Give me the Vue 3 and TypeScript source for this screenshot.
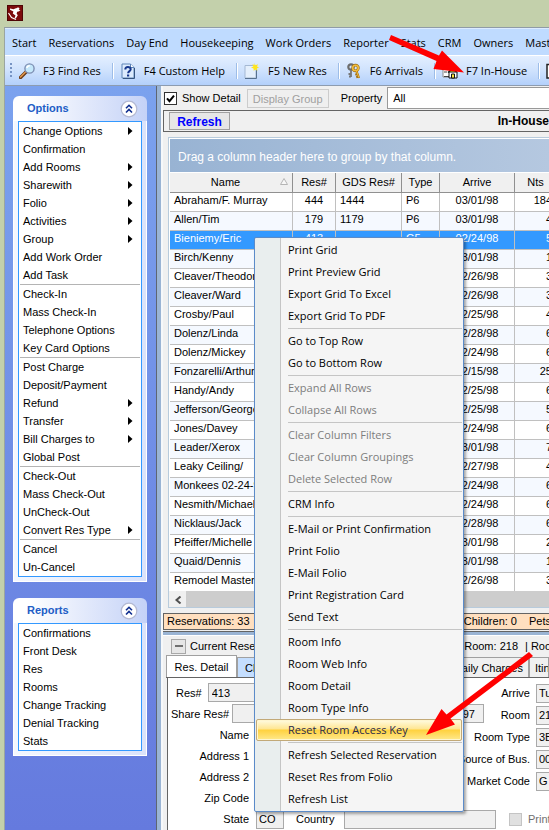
<script setup lang="ts">
import { ref } from 'vue'

interface Option { label: string; sub?: boolean }
interface Row { name: string; res: string; gds: string; type: string; arrive: string; nts: number }

const menus = ['Start', 'Reservations', 'Day End', 'Housekeeping', 'Work Orders', 'Reporter', 'Stats', 'CRM', 'Owners', 'Master']
const tools = [
  { icon: 'find', label: 'F3 Find Res' },
  { icon: 'help', label: 'F4 Custom Help' },
  { icon: 'new', label: 'F5 New Res' },
  { icon: 'keys', label: 'F6 Arrivals' },
  { icon: 'house', label: 'F7 In-House' },
  { icon: 'page', label: '' },
]

const o = (label: string, sub = false): Option => ({ label, sub })
const optionGroups: Option[][] = [
  [o('Change Options', true), o('Confirmation'), o('Add Rooms', true), o('Sharewith', true), o('Folio', true), o('Activities', true), o('Group', true), o('Add Work Order'), o('Add Task')],
  [o('Check-In'), o('Mass Check-In'), o('Telephone Options'), o('Key Card Options')],
  [o('Post Charge'), o('Deposit/Payment'), o('Refund', true), o('Transfer', true), o('Bill Charges to', true), o('Global Post')],
  [o('Check-Out'), o('Mass Check-Out'), o('UnCheck-Out'), o('Convert Res Type', true)],
  [o('Cancel'), o('Un-Cancel')],
]
const reportGroups: Option[][] = [
  ['Confirmations', 'Front Desk', 'Res', 'Rooms', 'Change Tracking', 'Denial Tracking', 'Stats'].map((l) => o(l)),
]
const panels = [
  { title: 'Options', groups: optionGroups },
  { title: 'Reports', groups: reportGroups },
]

const r = (name: string, arrive: string, nts: number, res = '', gds = '', type = ''): Row => ({ name, arrive, nts, res, gds, type })
const rows: Row[] = [
  r('Abraham/F. Murray', '03/01/98', 184, '444', '1444', 'P6'),
  r('Allen/Tim', '03/01/98', 4, '179', '1179', 'P6'),
  r('Bieniemy/Eric', '02/24/98', 5, '413', '', 'G5'),
  r('Birch/Kenny', '03/01/98', 1),
  r('Cleaver/Theodore', '02/26/98', 3),
  r('Cleaver/Ward', '02/26/98', 3),
  r('Crosby/Paul', '02/25/98', 4),
  r('Dolenz/Linda', '02/28/98', 6),
  r('Dolenz/Mickey', '02/24/98', 6),
  r('Fonzarelli/Arthur', '02/15/98', 25),
  r('Handy/Andy', '02/25/98', 6),
  r('Jefferson/George', '02/25/98', 5),
  r('Jones/Davey', '02/24/98', 6),
  r('Leader/Xerox', '03/01/98', 7),
  r('Leaky Ceiling/', '02/27/98', 4),
  r('Monkees 02-24-98', '02/24/98', 6),
  r('Nesmith/Michael', '02/24/98', 6),
  r('Nicklaus/Jack', '02/28/98', 6),
  r('Pfeiffer/Michelle', '03/01/98', 2),
  r('Quaid/Dennis', '03/01/98', 1),
  r('Remodel Master', '02/26/98', 3),
]

const contextGroups: { disabled?: boolean; items: string[] }[] = [
  { items: ['Print Grid', 'Print Preview Grid', 'Export Grid To Excel', 'Export Grid To PDF'] },
  { items: ['Go to Top Row', 'Go to Bottom Row'] },
  { disabled: true, items: ['Expand All Rows', 'Collapse All Rows'] },
  { disabled: true, items: ['Clear Column Filters', 'Clear Column Groupings', 'Delete Selected Row'] },
  { items: ['CRM Info'] },
  { items: ['E-Mail or Print Confirmation', 'Print Folio', 'E-Mail Folio', 'Print Registration Card', 'Send Text'] },
  { items: ['Room Info', 'Room Web Info', 'Room Detail', 'Room Type Info', 'Reset Room Access Key'] },
  { items: ['Refresh Selected Reservation', 'Reset Res from Folio', 'Refresh List'] },
]
const highlighted = 'Reset Room Access Key'

const showDetail = ref(true)
const selected = ref(2)
const stay = [
  { id: 'arrive', label: 'Arrive', value: 'Tue 02/24/98' },
  { id: 'room', label: 'Room', value: '218' },
  { id: 'roomtype', label: 'Room Type', value: '3B' },
  { id: 'source', label: 'Source of Bus.', value: '00' },
  { id: 'market', label: 'Market Code', value: 'G' },
]
</script>

<template>
  <div class="desktop">
    <header class="titlebar">
      <svg class="logo" viewBox="0 0 16 16" width="16" height="16">
        <rect width="16" height="16" fill="#7c0a0c" />
        <rect x=".5" y=".5" width="15" height="15" fill="none" stroke="#4d0505" />
        <circle cx="11" cy="3.800" r="1.400" fill="#fff" />
        <path d="M3 3.500l3.500.8L9.500 3l1.300 1.800 2.700.5-1.900 1.300-1.400.2-.6 1.700 1.200 1.800-2 3.200-1.200-.6.900-2.400-2.700-2 .6-2.100L3 4.800z" fill="#fff" />
        <path d="M1.500 8l3 4.500 4.500 2" fill="none" stroke="#fff" stroke-width="1.200" />
      </svg>
    </header>

    <div class="window">
      <nav class="menubar">
        <button v-for="m in menus" :key="m" type="button">{{ m }}</button>
      </nav>

      <div class="toolbar">
        <span class="grip"></span>
        <button v-for="t in tools" :key="t.icon" type="button" :aria-label="t.label || 'Page'">
          <svg v-if="t.icon === 'find'" viewBox="0 0 16 16" width="16" height="16">
            <path d="M1.500 14.500L7.500 8.500" stroke="#6b3a18" stroke-width="3.400" stroke-linecap="round" />
            <path d="M1.500 14L7 8.500" stroke="#e39a4e" stroke-width="1.500" stroke-linecap="round" />
            <circle cx="10.500" cy="5.500" r="4.600" fill="#c4e8fb" stroke="#7d8fb3" stroke-width="1.400" />
            <path d="M7.800 5.200a3 3 0 0 1 3-2.500" stroke="#fff" stroke-width="1.500" fill="none" />
          </svg>
          <svg v-else-if="t.icon === 'help'" viewBox="0 0 16 16" width="16" height="16">
            <path d="M2 1h8.500L14 4.500V15H2z" fill="#dcebfd" stroke="#5f86b8" />
            <path d="M10.500 1v3.500H14" fill="#fff" stroke="#5f86b8" />
            <path d="M14.500 5v10.500H3" fill="none" stroke="#35557f" />
            <path d="M5.300 6.500C5.300 3.200 10.700 3.300 10.700 6.300c0 1.800-2.600 1.900-2.600 4" fill="none" stroke="#15368c" stroke-width="2" />
            <rect x="7" y="11.500" width="2.200" height="2" fill="#15368c" />
          </svg>
          <svg v-else-if="t.icon === 'new'" viewBox="0 0 16 16" width="16" height="16">
            <path d="M1 2.500h11V15H1z" fill="#e4effc" stroke="#a4b8d3" />
            <path d="M12.500 6v9.500H1" fill="none" stroke="#58718f" />
            <path d="M10.500 0l1 2.300L14 1.200 13 3.600l2 1-2.200.9.700 2.300-2.400-1.200L9.800 8l-.3-2.500L7 4.600l2.300-1.100-.8-2.400 2 1.200z" fill="#ffe51f" />
          </svg>
          <svg v-else-if="t.icon === 'keys'" viewBox="0 0 16 16" width="16" height="16">
            <circle cx="5" cy="4" r="2.700" fill="none" stroke="#6d6d6d" stroke-width="2.200" />
            <path d="M5 7v7M5 11H2.500M5 13.500H3" stroke="#777" stroke-width="1.800" />
            <circle cx="9.500" cy="5" r="2.800" fill="none" stroke="#9a6b12" stroke-width="2.800" />
            <circle cx="9.500" cy="5" r="2.800" fill="none" stroke="#f2bd3d" stroke-width="1.600" />
            <path d="M10.500 8l2.500 7M11.500 11l-2.200.8M12.500 13.500l-2.300.8" stroke="#a87414" stroke-width="2.200" />
            <path d="M10.500 8l2.300 6.500" stroke="#f2bd3d" />
          </svg>
          <svg v-else-if="t.icon === 'house'" viewBox="0 0 16 16" width="16" height="16">
            <path d="M1 2h9v12H1z" fill="#fff" stroke="#8b8b8b" />
            <path d="M2 6h4M2 9h3M2 13.500h6" stroke="#444" />
            <path d="M6 9.500l4.500-4 4.500 4" fill="#ffe93b" stroke="#111" stroke-width="1.500" />
            <path d="M7 9h8v6H7z" fill="#fff" stroke="#111" />
            <path d="M9.500 11h3v4h-3z" fill="#ffe93b" stroke="#111" />
          </svg>
          <svg v-else viewBox="0 0 16 16" width="16" height="16">
            <path d="M1 1.500h13V15H1z" fill="#fff" stroke="#222" stroke-width="1.500" />
          </svg>
          <span v-if="t.label">{{ t.label }}</span>
        </button>
      </div>

      <div class="body">
        <aside class="sidebar">
          <section v-for="p in panels" :key="p.title" class="panel">
            <h2>
              {{ p.title }}
              <button type="button" class="collapse" :aria-label="'Collapse ' + p.title">
                <svg viewBox="0 0 18 18" width="18" height="18">
                  <circle cx="9" cy="9" r="7.800" fill="#fff" stroke="#b3b9d2" stroke-width="1.200" />
                  <path d="M6 8.300L9 5.300l3 3M6 12.500l3-3 3 3" fill="none" stroke="#102f90" stroke-width="1.600" />
                </svg>
              </button>
            </h2>
            <div class="panel-body">
              <ul v-for="(g, i) in p.groups" :key="i">
                <li v-for="it in g" :key="it.label">
                  <button type="button">
                    <span>{{ it.label }}</span>
                    <svg v-if="it.sub" viewBox="0 0 5 8" width="5" height="8"><path d="M0 0l4.500 4L0 8z" fill="#000" /></svg>
                  </button>
                </li>
              </ul>
            </div>
          </section>
        </aside>

        <div class="splitter"></div>

        <main class="content">
          <div class="filters">
            <label class="check">
              <input v-model="showDetail" type="checkbox" />
              <svg viewBox="0 0 13 13" width="13" height="13">
                <rect x=".5" y=".5" width="12" height="12" fill="#fff" stroke="#333" />
                <path v-if="showDetail" d="M3 6.300l2.500 2.900L10 3.700" fill="none" stroke="#000" stroke-width="2" />
              </svg>
              Show Detail
            </label>
            <button type="button" class="display" disabled>Display Group</button>
            <label for="property">Property</label>
            <select id="property"><option>All</option></select>
          </div>

          <div class="heading">
            <button type="button" class="refresh">Refresh</button>
            <strong>In-House</strong>
          </div>

          <div class="grid">
            <div class="groupby">Drag a column header here to group by that column.</div>
            <table>
              <colgroup><col class="c-name" /><col class="c-res" /><col class="c-gds" /><col class="c-type" /><col class="c-arrive" /><col /></colgroup>
              <thead>
                <tr>
                  <th class="sorted">
                    <span>Name</span>
                    <svg viewBox="0 0 8 7" width="8" height="7"><path d="M.5 6.500L4 .5l3.500 6z" fill="#f8f8f8" stroke="#b5b5b5" /></svg>
                  </th>
                  <th>Res#</th><th>GDS Res#</th><th>Type</th><th>Arrive</th><th>Nts</th>
                </tr>
              </thead>
              <tbody>
                <tr v-for="(row, i) in rows" :key="row.name" :class="{ selected: i === selected }" @click="selected = i">
                  <td>{{ row.name }}</td>
                  <td class="mid">{{ row.res }}</td>
                  <td>{{ row.gds }}</td>
                  <td>{{ row.type }}</td>
                  <td class="mid">{{ row.arrive }}</td>
                  <td class="num">{{ row.nts }}</td>
                </tr>
              </tbody>
            </table>
            <div class="scroll">
              <button type="button" aria-label="Scroll left">
                <svg viewBox="0 0 8 8" width="8" height="8"><path d="M6.500 .5L2.500 4l4 3.500" fill="none" stroke="#505050" stroke-width="2" /></svg>
              </button>
              <span class="thumb"></span>
            </div>
          </div>

          <div class="totals">
            <span>Reservations: 33</span>
            <span class="right">Children: 0</span>
            <span>Pets: 0</span>
          </div>
          <div class="hsplit"></div>

          <section class="detail">
            <div class="legend">
              <button type="button" aria-label="Collapse detail">
                <svg viewBox="0 0 8 2" width="8" height="2"><path d="M0 1h8" stroke="#222" stroke-width="1.200" /></svg>
              </button>
              <span>Current Reservation</span>
              <span class="right">Room: 218</span>
              <span class="roomtype">| Room Type</span>
            </div>
            <div class="tabs">
              <button type="button" class="active">Res. Detail</button>
              <button type="button" class="blue">Charges</button>
              <button type="button" class="right">Daily Charges</button>
              <button type="button" class="last">Itinerary</button>
            </div>
            <div class="form">
              <div class="columns">
                <div class="guest">
                  <div class="field"><label for="res">Res#</label><input id="res" value="413" readonly /></div>
                  <div class="field"><label for="share">Share Res#</label><input id="share" readonly /></div>
                  <div class="field wide"><label for="name">Name</label><input id="name" readonly /></div>
                  <div class="field wide"><label for="a1">Address 1</label><input id="a1" readonly /></div>
                  <div class="field wide"><label for="a2">Address 2</label><input id="a2" readonly /></div>
                  <div class="field wide"><label for="zip">Zip Code</label><input id="zip" readonly /></div>
                </div>
                <input class="date" aria-label="Date made" value="97" readonly />
                <div class="stay">
                  <div v-for="s in stay" :key="s.id" class="field">
                    <label :for="s.id">{{ s.label }}</label><input :id="s.id" :value="s.value" readonly />
                  </div>
                </div>
              </div>
              <div class="bottom">
                <label class="state" for="state">State</label><input id="state" value="CO" readonly />
                <label class="country" for="country">Country</label><input id="country" readonly />
                <label class="print"><input type="checkbox" disabled />Print</label>
              </div>
            </div>
          </section>
        </main>
      </div>
    </div>

    <div class="context" role="menu">
      <div v-for="(g, i) in contextGroups" :key="i" class="cgroup">
        <button
          v-for="it in g.items" :key="it" type="button" role="menuitem"
          :disabled="g.disabled" :class="{ hot: it === highlighted }"
        >{{ it }}</button>
      </div>
    </div>

    <svg class="arrow first" viewBox="0 0 76 38" width="76" height="38">
      <path d="M2 -1L50 19.500 53 14.500 75 36.500 44.500 33 47.500 25 0 4z" fill="#f00" />
    </svg>
    <svg class="arrow second" viewBox="0 0 108 86" width="108" height="86">
      <path d="M103 1L20.500 63.500 15.500 58 0 84 29 73.500 24.500 67.500 107 5z" fill="#f00" />
    </svg>
  </div>
</template>

<style>
body {
  overflow: hidden;
}
</style>

<style scoped>
.desktop {
  position: relative;
  min-height: 100vh;
  background: #c3d0ab;
  color: #000;
  font: 11px/18px "Liberation Sans", sans-serif;
  white-space: nowrap;
  overflow: hidden;
}
* { box-sizing: border-box; }
button, input, select {
  font: inherit;
  color: inherit;
  margin: 0;
  padding: 0;
  border: 0;
  border-radius: 0;
  background: none;
}
.titlebar { height: 27px; padding: 5px 7px; }
.logo { display: block; }
.window {
  margin-left: 4px;
  border-left: 1px solid #9aa5a0;
  border-top: 1px solid #8f9ba6;
  overflow: hidden;
}
.menubar {
  display: flex;
  gap: 12px;
  height: 28px;
  padding: 1px 7px 0;
  background: #bfdbff;
  border-top: 1px solid #dcebff;
  border-bottom: 1px solid #fff;
  font-family: "Open Sans", sans-serif;
}
.toolbar {
  display: flex;
  align-items: center;
  height: 30px;
  padding-left: 5px;
  background: linear-gradient(#e3efff, #cfe2fd 50%, #b3d0fb);
  border-bottom: 1px solid #8d9cb0;
  font-family: "Open Sans", sans-serif;
}
.grip {
  flex: none;
  width: 2px;
  height: 16px;
  margin-right: 7px;
  background: repeating-linear-gradient(#7794c4 0 2px, transparent 2px 4px);
}
.toolbar button {
  display: flex;
  flex: none;
  align-items: center;
  gap: 8px;
  height: 16px;
}
.toolbar button + button {
  border-left: 1px solid #9dbde8;
  box-shadow: inset 1px 0 #fff;
  margin-left: 11px;
  padding-left: 7px;
}
.body { display: flex; }
.sidebar {
  flex: none;
  width: 151px;
  padding: 10px 9px 0 8px;
  background: linear-gradient(#7ba2ee, #657ade);
}
.panel { margin-bottom: 16px; }
.panel h2 {
  display: flex;
  align-items: center;
  justify-content: space-between;
  height: 25px;
  margin: 0;
  padding: 0 9px 0 14px;
  border-radius: 6px 6px 0 0;
  background: linear-gradient(90deg, #fff 10%, #c4d2f7);
  color: #215dc6;
  font-size: 11px;
  line-height: 25px;
}
.collapse svg { display: block; }
.panel-body {
  padding: 0 4px 4px;
  background: linear-gradient(90deg, #f4f7fe, #dbe3fa);
  border: 1px solid #fff;
  border-top: 0;
}
.panel-body::before, .panel-body::after { content: ""; display: block; height: 1px; background: #39f; }
.panel-body ul {
  margin: 0;
  padding: 0 1px;
  list-style: none;
  background: #fff;
  border: solid #39f;
  border-width: 0 1px;
}
.panel-body ul + ul::before { content: ""; display: block; height: 1px; background: #b4b4b4; }
.panel-body li button {
  display: flex;
  align-items: center;
  justify-content: space-between;
  width: 100%;
  height: 18px;
  padding: 0 7px 0 3px;
}
.splitter {
  flex: none;
  width: 7px;
  background: #9ab4d4;
  border-left: 1px solid #5d6673;
  border-right: 2px solid #f6f8fa;
}
.content { flex: 1; min-width: 0; background: #f0f0f0; }
.filters { display: flex; align-items: center; height: 24px; }
.check { display: flex; align-items: center; gap: 5px; padding-left: 1px; }
.check input { position: absolute; opacity: 0; }
.display {
  width: 82px;
  height: 19px;
  margin: 0 12px 0 6px;
  border: 1px solid #ccc;
  background: #efefef;
  color: #a0a0a0;
}
.filters select {
  flex: 1;
  min-width: 0;
  height: 22px;
  margin-left: 5px;
  padding-left: 5px;
  background: #fff;
  border: 1px solid #999;
  border-right: 0;
  appearance: none;
}
.heading {
  display: flex;
  align-items: center;
  justify-content: space-between;
  height: 22px;
  padding: 0 0 0 5px;
  border: 1px solid #646464;
  border-right: 0;
  font-size: 12px;
}
.refresh {
  width: 61px;
  height: 18px;
  border: 1px solid #a0a0a0;
  background: #e6e6e6;
  color: #00f;
  font-weight: bold;
}
.grid {
  margin: 5px 0 0 5px;
  border: 1px solid #b8cbdc;
  border-right: 0;
  background: #fff;
  overflow: hidden;
}
.groupby {
  height: 33px;
  margin: 1px 0 1px 1px;
  padding-left: 8px;
  background: linear-gradient(90deg, #98b3d3, #b5c8e0);
  color: #fff;
  font-size: 12px;
  line-height: 36px;
}
table {
  width: 100%;
  min-width: 387px;
  margin-left: 1px;
  table-layout: fixed;
  border-collapse: separate;
  border-spacing: 0;
}
.c-name { width: 123px; }
.c-res { width: 43px; }
.c-gds { width: 66px; }
.c-type { width: 38px; }
.c-arrive { width: 75px; }
th {
  height: 20px;
  padding: 0;
  background: #f0f0f0;
  border-right: 1px solid #909090;
  border-bottom: 1px solid #909090;
  font-weight: normal;
  line-height: 19px;
}
.sorted { position: relative; padding-right: 11px; }
.sorted svg { position: absolute; right: 4px; top: 5px; }
td {
  padding: 0 4px 3px;
  border-right: 1px solid #c0c0c0;
  border-bottom: 1px solid #c0c0c0;
  background: #fff;
  line-height: 15px;
  overflow: hidden;
}
tr:nth-child(even) td { background: #f5f9ff; }
tr.selected td { background: #39f; color: #fff; }
tr:last-child td { border-bottom: 0; }
.mid { text-align: center; }
.num { text-align: right; }
.scroll { display: flex; height: 16px; background: #cdcdcd; }
.scroll button { width: 17px; background: #f0f0f0; }
.thumb { flex: 1; }
.totals {
  display: flex;
  gap: 12px;
  height: 17px;
  margin-top: 5px;
  padding-left: 3px;
  border: 1px solid #646464;
  border-right: 0;
  background: #ffdfbf;
  line-height: 15px;
}
.totals .right { margin-left: auto; }
.totals span:last-child { width: 20px; }
.hsplit { height: 5px; margin-top: 1px; background: #9ab4d4; border-top: 1px solid #646464; border-bottom: 1px solid #fff; }
.detail { padding: 0 0 0 3px; }
.legend { display: flex; align-items: center; height: 20px; padding-left: 5px; }
.legend button {
  display: flex;
  align-items: center;
  justify-content: center;
  width: 15px;
  height: 15px;
  margin-right: 4px;
  border: 1px solid #a8a8a8;
  background: #e6e6e6;
}
.legend .right { margin-left: auto; }
.roomtype { width: 24px; margin-left: 7px; overflow: hidden; }
.tabs { display: flex; height: 22px; align-items: flex-end; border-bottom: 1px solid #646464; }
.tabs button {
  height: 20px;
  padding: 0 7px;
  border: 1px solid #a0a0a0;
  border-bottom: 0;
  background: #f0f0f0;
}
.tabs .active { width: 71px; height: 22px; background: #fff; }
.tabs .blue { background: #c4deff; }
.tabs .right { margin-left: auto; padding: 0 5px; }
.tabs .last { width: 20px; padding: 0 5px; overflow: hidden; text-align: left; }
.form {
  margin-left: 1px;
  padding-top: 4px;
  background: #fff;
  border-left: 1px solid #646464;
}
.columns { display: flex; }
.guest { flex: none; width: 240px; }
.field { display: flex; align-items: center; height: 21px; gap: 6px; }
.field label { flex: none; text-align: right; }
.field input, .date, .bottom > input {
  min-width: 0;
  height: 19px;
  padding-left: 3px;
  border: 1px solid #a9a9a9;
  background: #f0f0f0;
}
.guest .field { padding-left: 8px; }
.guest .field + .field { padding-left: 3px; }
.guest .field + .field:not(.wide) { gap: 3px; }
.guest .wide label { width: 78px; }
.date { flex: none; width: 76px; margin-top: 22px; text-align: right; padding-right: 8px; }
.stay { flex: 1; min-width: 0; }
.stay .field { height: 22px; justify-content: flex-end; }
.stay .field input { flex: none; width: 13px; padding-left: 2px; border-right: 0; }
.bottom { display: flex; align-items: center; height: 22px; }
.state { width: 81px; text-align: right; }
#state { width: 28px; margin-left: 7px; padding-left: 2px; }
.country { margin: 0 9px 0 12px; }
#country { flex: 1; }
.print { display: flex; align-items: center; gap: 6px; width: 53px; padding-left: 13px; color: #707070; }
.print input { flex: none; width: 13px; height: 13px; appearance: none; background: #e0e0e0; border: 1px solid #c4c4c4; }

.context {
  position: absolute;
  left: 254px;
  top: 237px;
  width: 210px;
  padding: 1px;
  border: 1px solid #5b8bc9;
  border-radius: 2px;
  background: linear-gradient(90deg, #e9eeee 25px, #c5c5c5 25px 26px, #f5f5f5 26px);
  box-shadow: 2px 2px 3px rgba(0, 0, 0, 0.35);
  font-family: "Open Sans", sans-serif;
}
.cgroup + .cgroup::before {
  content: "";
  display: block;
  height: 1px;
  margin: 1px 0 1px 32px;
  background: #c5c5c5;
}
.context button {
  display: block;
  width: 100%;
  height: 22px;
  padding: 0 0 0 31px;
  border: 1px solid transparent;
  border-radius: 2px;
  text-align: left;
  line-height: 20px;
}
.context button:disabled { color: #7d7d7d; }
.context .hot {
  border-color: #c2a978;
  background: linear-gradient(#fffbe2, #ffe691 45%, #ffd13e 50%, #ffe98c);
  box-shadow: inset 0 0 0 1px #fff6cf;
  color: #2a2a4a;
}
.arrow { position: absolute; overflow: visible; pointer-events: none; }
.first { left: 389px; top: 36px; }
.second { left: 426px; top: 651px; }
</style>
